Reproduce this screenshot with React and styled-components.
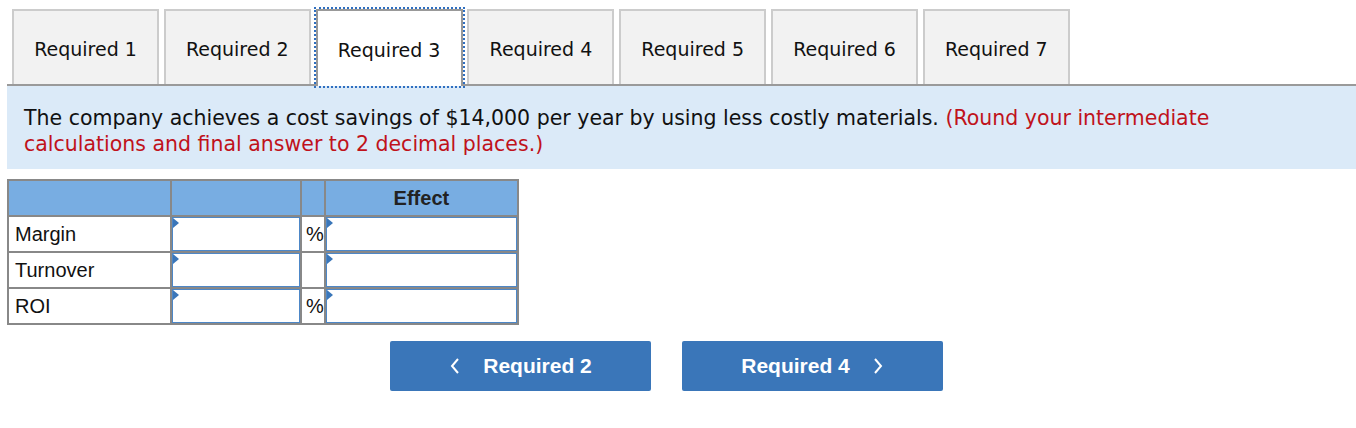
import styled, { createGlobalStyle } from 'styled-components';

const GlobalStyle = createGlobalStyle`
  body {
    margin: 0;
    background: #fff;
    font-family: "DejaVu Sans", Verdana, sans-serif;
  }
`;

const tabs = ['Required 1', 'Required 2', 'Required 3', 'Required 4', 'Required 5', 'Required 6', 'Required 7'];

const rows = [
  { label: 'Margin', pct: true },
  { label: 'Turnover', pct: false },
  { label: 'ROI', pct: true },
];

const App = () => {
  return (
    <Page>
      <GlobalStyle />
      <TabBar>
        {tabs.map((t, i) => (
          <Tab key={t} active={i === 2}>{t}</Tab>
        ))}
      </TabBar>
      <Question>
        The company achieves a cost savings of $14,000 per year by using less costly materials.{' '}
        <Hint>(Round your intermediate calculations and final answer to 2 decimal places.)</Hint>
      </Question>
      <Table>
        <thead>
          <tr>
            <HeadCell w={161}></HeadCell>
            <HeadCell w={128}></HeadCell>
            <HeadCell w={21}></HeadCell>
            <HeadCell>Effect</HeadCell>
          </tr>
        </thead>
        <tbody>
          {rows.map(r => (
            <tr key={r.label}>
              <LabelCell>{r.label}</LabelCell>
              <InputCell><Field /></InputCell>
              <PctCell>{r.pct ? '%' : ''}</PctCell>
              <InputCell><Field /></InputCell>
            </tr>
          ))}
        </tbody>
      </Table>
      <NavRow>
        <NavButton>
          <svg width="12" height="18" viewBox="0 0 12 18"><path d="M9 2 L3 9 L9 16" fill="none" stroke="#fff" strokeWidth="2" /></svg>
          <span>Required 2</span>
        </NavButton>
        <NavButton>
          <span>Required 4</span>
          <svg width="12" height="18" viewBox="0 0 12 18"><path d="M3 2 L9 9 L3 16" fill="none" stroke="#fff" strokeWidth="2" /></svg>
        </NavButton>
      </NavRow>
    </Page>
  );
};

const Page = styled.div`
  width: 1356px;
  height: 428px;
  padding: 9px 0 0 7px;
  box-sizing: border-box;
`;

const TabBar = styled.div`
  display: flex;
  gap: 4.8px;
  padding-left: 5px;
  border-bottom: 2px solid #9a9a9a;
  height: 75px;
  align-items: flex-end;
`;

const Tab = styled.div`
  width: 147px;
  box-sizing: border-box;
  border: 2px solid ${p => (p.active ? '#999' : '#ccc')};
  border-bottom: none;
  background: ${p => (p.active ? '#fff' : '#f2f2f2')};
  outline: ${p => (p.active ? '2px dotted #2f6fc0' : 'none')};
  display: flex;
  align-items: center;
  justify-content: center;
  padding-top: 2px;
  font-size: 19px;
  color: #111;
  margin-bottom: ${p => (p.active ? '-2px' : '0')};
  height: ${p => (p.active ? '77px' : '75px')};
`;

const Question = styled.div`
  background: #dbeaf8;
  padding: 19px 110px 12px 17px;
  font-size: 20.5px;
  line-height: 26px;
  color: #111;
`;

const Hint = styled.span`
  color: #c0121b;
`;

const Table = styled.table`
  margin-top: 10px;
  border-collapse: collapse;
  border: 2px solid #888;
  width: 512px;
  font-family: "Liberation Sans", Arial, sans-serif;
`;

const HeadCell = styled.th`
  width: ${p => (p.w ? `${p.w}px` : 'auto')};
  background: #78ade2;
  border: 2px solid #888;
  height: 34px;
  padding: 0;
  font-size: 20px;
  font-weight: bold;
  color: #222;
`;

const LabelCell = styled.td`
  border: 2px solid #888;
  height: 34px;
  padding: 0 0 0 6px;
  font-size: 20px;
  color: #111;
`;

const InputCell = styled.td`
  border: 2px solid #888;
  padding: 0;
  height: 34px;
`;

const PctCell = styled.td`
  border: 2px solid #888;
  padding: 0 0 0 4px;
  font-size: 20px;
  color: #111;
  background: #fff;
`;

const Field = styled.div`
  position: relative;
  height: 34px;
  box-sizing: border-box;
  border: 1px solid #4d87c7;
  background: #fff;
  &::before {
    content: '';
    position: absolute;
    left: 0;
    top: 0;
    border-left: 6px solid #3a76b9;
    border-top: 5px solid transparent;
    border-bottom: 5px solid transparent;
  }
`;

const NavRow = styled.div`
  display: flex;
  gap: 31px;
  padding-left: 383px;
  margin-top: 16px;
`;

const NavButton = styled.div`
  width: 261px;
  height: 50px;
  background: #3a76b9;
  border-radius: 2px;
  display: flex;
  align-items: center;
  justify-content: center;
  gap: 22px;
  color: #fff;
  font-family: "Liberation Sans", Arial, sans-serif;
  font-weight: bold;
  font-size: 21px;
`;

export default App;
